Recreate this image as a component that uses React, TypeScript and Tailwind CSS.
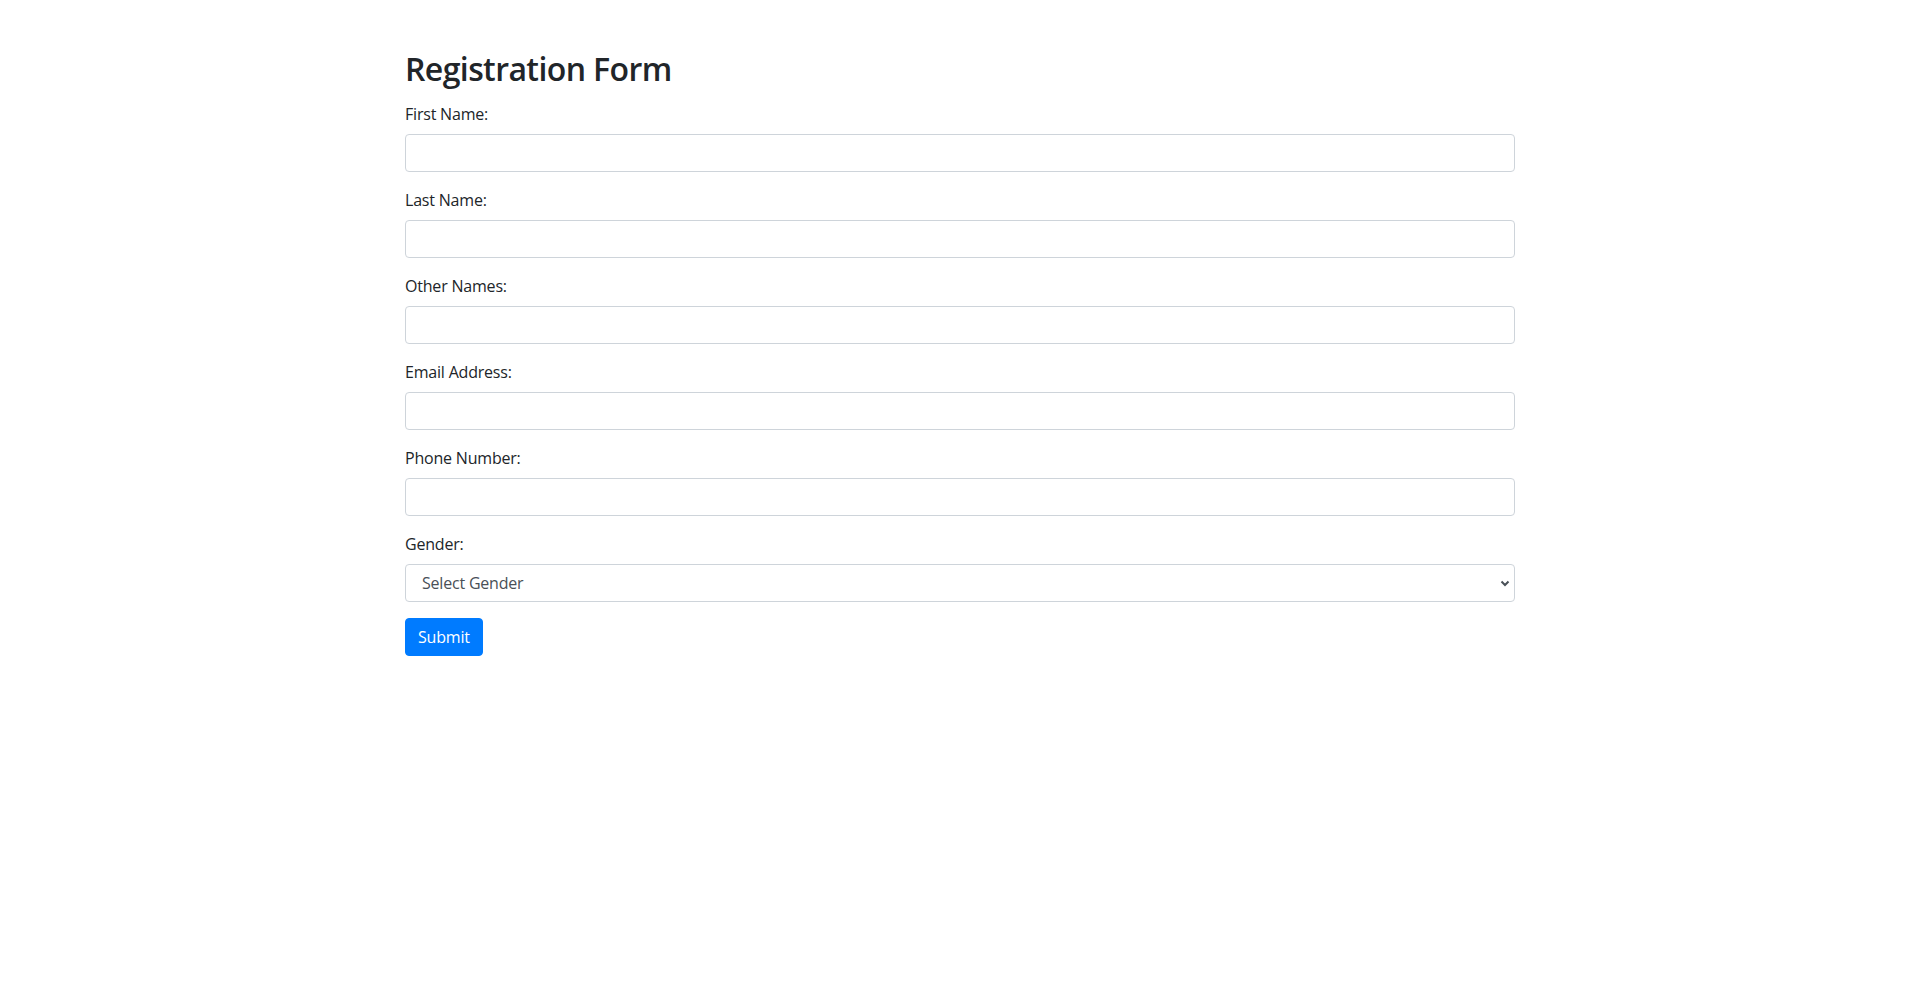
import React, { useState } from "react";

const fields = [
  { id: "firstName", label: "First Name:", type: "text" },
  { id: "lastName", label: "Last Name:", type: "text" },
  { id: "otherNames", label: "Other Names:", type: "text" },
  { id: "email", label: "Email Address:", type: "email" },
  { id: "phone", label: "Phone Number:", type: "tel" },
];

const inputClass =
  "block w-full h-[38px] px-3 py-1.5 text-base leading-6 text-[#495057] bg-white border border-[#ced4da] rounded outline-none focus:border-[#80bdff]";

export default function App() {
  const [values, setValues] = useState<Record<string, string>>({});
  const [gender, setGender] = useState("");

  const handleChange = (id: string, value: string) => {
    setValues((prev) => ({ ...prev, [id]: value }));
  };

  return (
    <div className="min-h-screen bg-white text-[#212529] font-['Segoe_UI','Open_Sans',sans-serif]">
      <div className="mx-auto w-[1140px] px-[15px] pt-[50px]">
        <h2 className="mb-[14px] text-[32px] leading-[38.4px] font-semibold tracking-[-0.6px]">Registration Form</h2>
        <form onSubmit={(e) => e.preventDefault()}>
          {fields.map((field) => (
            <div key={field.id} className="mb-4">
              <label htmlFor={field.id} className="block mb-2 text-base leading-6 tracking-[-0.2px]">
                {field.label}
              </label>
              <input
                id={field.id}
                type={field.type}
                className={inputClass}
                value={values[field.id] || ""}
                onChange={(e) => handleChange(field.id, e.target.value)}
              />
            </div>
          ))}
          <div className="mb-4">
            <label htmlFor="gender" className="block mb-2 text-base leading-6 tracking-[-0.2px]">
              Gender:
            </label>
            <div className="relative">
              <select
                id="gender"
                value={gender}
                onChange={(e) => setGender(e.target.value)}
                className={inputClass + " appearance-none pl-4 tracking-[-0.2px]"}
              >
                <option value="">Select Gender</option>
                <option value="male">Male</option>
                <option value="female">Female</option>
              </select>
              <svg
                className="pointer-events-none absolute right-[5px] top-1/2 -translate-y-1/2"
                width="10"
                height="8"
                viewBox="0 0 10 8"
              >
                <path d="M1.5 2.5 L5 6 L8.5 2.5" fill="none" stroke="#495057" strokeWidth="2" />
              </svg>
            </div>
          </div>
          <button
            type="submit"
            className="h-[38px] px-3 text-base leading-6 tracking-[-0.2px] text-white bg-[#007bff] border border-[#007bff] rounded hover:bg-[#0069d9]"
          >
            Submit
          </button>
        </form>
      </div>
    </div>
  );
}
